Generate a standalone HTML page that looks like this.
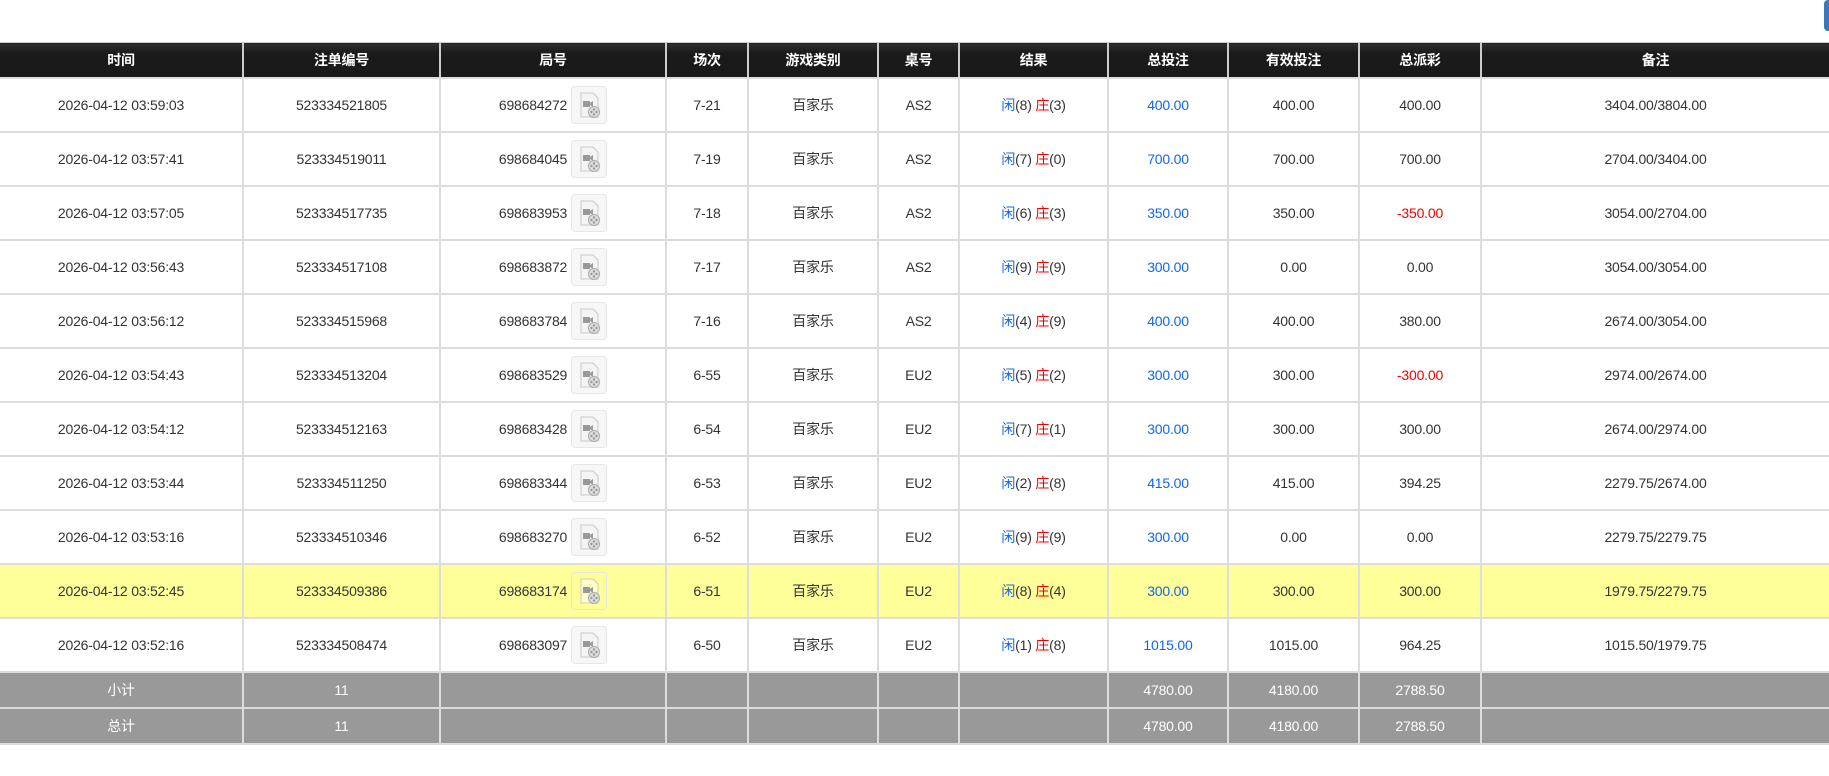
<!DOCTYPE html>
<html><head><meta charset="utf-8"><style>
body{margin:0;background:#fff;font-family:"Liberation Sans","Noto Sans CJK SC",sans-serif;font-size:14px;color:#333;width:1829px;height:776px;overflow:hidden;position:relative}
.btn{position:absolute;right:0;top:0;width:5px;height:31px;background:#3a78b8;border-radius:4px 0 0 4px}
table{position:absolute;top:42px;left:0;width:1829px;border-collapse:collapse;table-layout:fixed}
th,td{text-align:center;border:2px solid #ddd;padding:0;white-space:nowrap;letter-spacing:-0.2px}
tr>*:first-child{border-left:none}
tr>*:last-child{border-right:none}
th{background:linear-gradient(#2e2e2e,#1a1a1a 30%,#1a1a1a);color:#fff;font-weight:bold;height:34px;border-top:1px solid #ccc;border-left-color:#ccc;border-right-color:#ccc}
td{height:52px}
tr.y td{background:#ffff99}
tr.f td{background:#999;color:#fff;height:34px}
.b{color:#1166ee}.r{color:#e00}
.n{display:inline-flex;align-items:center;gap:4px}
.ic{display:inline-block;width:34px;height:36px;border:1px solid #e6e6e6;border-radius:4px;background:#f7f7f7}
tr.y .ic{background:#ffff99}
</style></head><body>
<div class="btn"></div>
<table>
<colgroup><col style="width:243px"><col style="width:197px"><col style="width:226px"><col style="width:82px"><col style="width:130px"><col style="width:81px"><col style="width:149px"><col style="width:120px"><col style="width:131px"><col style="width:122px"><col></colgroup>
<tr><th>时间</th><th>注单编号</th><th>局号</th><th>场次</th><th>游戏类别</th><th>桌号</th><th>结果</th><th>总投注</th><th>有效投注</th><th>总派彩</th><th>备注</th></tr>
<tr><td>2026-04-12 03:59:03</td><td>523334521805</td><td><span class="n">698684272<span class="ic"><svg width="34" height="36"><path d="M9 6h12l5 5v19H9z" fill="#f4f4f4" stroke="#c8c8c8"/><path d="M11 14h7v6h-7z M18 16l3-2v6l-3-2z" fill="#999"/><circle cx="22" cy="25" r="5.5" fill="#ddd" stroke="#aaa"/><circle cx="22" cy="22.5" r="1.2" fill="#999"/><circle cx="22" cy="27.5" r="1.2" fill="#999"/><circle cx="19.5" cy="25" r="1.2" fill="#999"/><circle cx="24.5" cy="25" r="1.2" fill="#999"/></svg></span></span></td><td>7-21</td><td>百家乐</td><td>AS2</td><td><span class="b">闲</span>(8) <span class="r">庄</span>(3)</td><td class="b">400.00</td><td>400.00</td><td>400.00</td><td>3404.00/3804.00</td></tr>
<tr><td>2026-04-12 03:57:41</td><td>523334519011</td><td><span class="n">698684045<span class="ic"><svg width="34" height="36"><path d="M9 6h12l5 5v19H9z" fill="#f4f4f4" stroke="#c8c8c8"/><path d="M11 14h7v6h-7z M18 16l3-2v6l-3-2z" fill="#999"/><circle cx="22" cy="25" r="5.5" fill="#ddd" stroke="#aaa"/><circle cx="22" cy="22.5" r="1.2" fill="#999"/><circle cx="22" cy="27.5" r="1.2" fill="#999"/><circle cx="19.5" cy="25" r="1.2" fill="#999"/><circle cx="24.5" cy="25" r="1.2" fill="#999"/></svg></span></span></td><td>7-19</td><td>百家乐</td><td>AS2</td><td><span class="b">闲</span>(7) <span class="r">庄</span>(0)</td><td class="b">700.00</td><td>700.00</td><td>700.00</td><td>2704.00/3404.00</td></tr>
<tr><td>2026-04-12 03:57:05</td><td>523334517735</td><td><span class="n">698683953<span class="ic"><svg width="34" height="36"><path d="M9 6h12l5 5v19H9z" fill="#f4f4f4" stroke="#c8c8c8"/><path d="M11 14h7v6h-7z M18 16l3-2v6l-3-2z" fill="#999"/><circle cx="22" cy="25" r="5.5" fill="#ddd" stroke="#aaa"/><circle cx="22" cy="22.5" r="1.2" fill="#999"/><circle cx="22" cy="27.5" r="1.2" fill="#999"/><circle cx="19.5" cy="25" r="1.2" fill="#999"/><circle cx="24.5" cy="25" r="1.2" fill="#999"/></svg></span></span></td><td>7-18</td><td>百家乐</td><td>AS2</td><td><span class="b">闲</span>(6) <span class="r">庄</span>(3)</td><td class="b">350.00</td><td>350.00</td><td class="r">-350.00</td><td>3054.00/2704.00</td></tr>
<tr><td>2026-04-12 03:56:43</td><td>523334517108</td><td><span class="n">698683872<span class="ic"><svg width="34" height="36"><path d="M9 6h12l5 5v19H9z" fill="#f4f4f4" stroke="#c8c8c8"/><path d="M11 14h7v6h-7z M18 16l3-2v6l-3-2z" fill="#999"/><circle cx="22" cy="25" r="5.5" fill="#ddd" stroke="#aaa"/><circle cx="22" cy="22.5" r="1.2" fill="#999"/><circle cx="22" cy="27.5" r="1.2" fill="#999"/><circle cx="19.5" cy="25" r="1.2" fill="#999"/><circle cx="24.5" cy="25" r="1.2" fill="#999"/></svg></span></span></td><td>7-17</td><td>百家乐</td><td>AS2</td><td><span class="b">闲</span>(9) <span class="r">庄</span>(9)</td><td class="b">300.00</td><td>0.00</td><td>0.00</td><td>3054.00/3054.00</td></tr>
<tr><td>2026-04-12 03:56:12</td><td>523334515968</td><td><span class="n">698683784<span class="ic"><svg width="34" height="36"><path d="M9 6h12l5 5v19H9z" fill="#f4f4f4" stroke="#c8c8c8"/><path d="M11 14h7v6h-7z M18 16l3-2v6l-3-2z" fill="#999"/><circle cx="22" cy="25" r="5.5" fill="#ddd" stroke="#aaa"/><circle cx="22" cy="22.5" r="1.2" fill="#999"/><circle cx="22" cy="27.5" r="1.2" fill="#999"/><circle cx="19.5" cy="25" r="1.2" fill="#999"/><circle cx="24.5" cy="25" r="1.2" fill="#999"/></svg></span></span></td><td>7-16</td><td>百家乐</td><td>AS2</td><td><span class="b">闲</span>(4) <span class="r">庄</span>(9)</td><td class="b">400.00</td><td>400.00</td><td>380.00</td><td>2674.00/3054.00</td></tr>
<tr><td>2026-04-12 03:54:43</td><td>523334513204</td><td><span class="n">698683529<span class="ic"><svg width="34" height="36"><path d="M9 6h12l5 5v19H9z" fill="#f4f4f4" stroke="#c8c8c8"/><path d="M11 14h7v6h-7z M18 16l3-2v6l-3-2z" fill="#999"/><circle cx="22" cy="25" r="5.5" fill="#ddd" stroke="#aaa"/><circle cx="22" cy="22.5" r="1.2" fill="#999"/><circle cx="22" cy="27.5" r="1.2" fill="#999"/><circle cx="19.5" cy="25" r="1.2" fill="#999"/><circle cx="24.5" cy="25" r="1.2" fill="#999"/></svg></span></span></td><td>6-55</td><td>百家乐</td><td>EU2</td><td><span class="b">闲</span>(5) <span class="r">庄</span>(2)</td><td class="b">300.00</td><td>300.00</td><td class="r">-300.00</td><td>2974.00/2674.00</td></tr>
<tr><td>2026-04-12 03:54:12</td><td>523334512163</td><td><span class="n">698683428<span class="ic"><svg width="34" height="36"><path d="M9 6h12l5 5v19H9z" fill="#f4f4f4" stroke="#c8c8c8"/><path d="M11 14h7v6h-7z M18 16l3-2v6l-3-2z" fill="#999"/><circle cx="22" cy="25" r="5.5" fill="#ddd" stroke="#aaa"/><circle cx="22" cy="22.5" r="1.2" fill="#999"/><circle cx="22" cy="27.5" r="1.2" fill="#999"/><circle cx="19.5" cy="25" r="1.2" fill="#999"/><circle cx="24.5" cy="25" r="1.2" fill="#999"/></svg></span></span></td><td>6-54</td><td>百家乐</td><td>EU2</td><td><span class="b">闲</span>(7) <span class="r">庄</span>(1)</td><td class="b">300.00</td><td>300.00</td><td>300.00</td><td>2674.00/2974.00</td></tr>
<tr><td>2026-04-12 03:53:44</td><td>523334511250</td><td><span class="n">698683344<span class="ic"><svg width="34" height="36"><path d="M9 6h12l5 5v19H9z" fill="#f4f4f4" stroke="#c8c8c8"/><path d="M11 14h7v6h-7z M18 16l3-2v6l-3-2z" fill="#999"/><circle cx="22" cy="25" r="5.5" fill="#ddd" stroke="#aaa"/><circle cx="22" cy="22.5" r="1.2" fill="#999"/><circle cx="22" cy="27.5" r="1.2" fill="#999"/><circle cx="19.5" cy="25" r="1.2" fill="#999"/><circle cx="24.5" cy="25" r="1.2" fill="#999"/></svg></span></span></td><td>6-53</td><td>百家乐</td><td>EU2</td><td><span class="b">闲</span>(2) <span class="r">庄</span>(8)</td><td class="b">415.00</td><td>415.00</td><td>394.25</td><td>2279.75/2674.00</td></tr>
<tr><td>2026-04-12 03:53:16</td><td>523334510346</td><td><span class="n">698683270<span class="ic"><svg width="34" height="36"><path d="M9 6h12l5 5v19H9z" fill="#f4f4f4" stroke="#c8c8c8"/><path d="M11 14h7v6h-7z M18 16l3-2v6l-3-2z" fill="#999"/><circle cx="22" cy="25" r="5.5" fill="#ddd" stroke="#aaa"/><circle cx="22" cy="22.5" r="1.2" fill="#999"/><circle cx="22" cy="27.5" r="1.2" fill="#999"/><circle cx="19.5" cy="25" r="1.2" fill="#999"/><circle cx="24.5" cy="25" r="1.2" fill="#999"/></svg></span></span></td><td>6-52</td><td>百家乐</td><td>EU2</td><td><span class="b">闲</span>(9) <span class="r">庄</span>(9)</td><td class="b">300.00</td><td>0.00</td><td>0.00</td><td>2279.75/2279.75</td></tr>
<tr class="y"><td>2026-04-12 03:52:45</td><td>523334509386</td><td><span class="n">698683174<span class="ic"><svg width="34" height="36"><path d="M9 6h12l5 5v19H9z" fill="#ffffcc" stroke="#c8c8c8"/><path d="M11 14h7v6h-7z M18 16l3-2v6l-3-2z" fill="#999"/><circle cx="22" cy="25" r="5.5" fill="#ddd" stroke="#aaa"/><circle cx="22" cy="22.5" r="1.2" fill="#999"/><circle cx="22" cy="27.5" r="1.2" fill="#999"/><circle cx="19.5" cy="25" r="1.2" fill="#999"/><circle cx="24.5" cy="25" r="1.2" fill="#999"/></svg></span></span></td><td>6-51</td><td>百家乐</td><td>EU2</td><td><span class="b">闲</span>(8) <span class="r">庄</span>(4)</td><td class="b">300.00</td><td>300.00</td><td>300.00</td><td>1979.75/2279.75</td></tr>
<tr><td>2026-04-12 03:52:16</td><td>523334508474</td><td><span class="n">698683097<span class="ic"><svg width="34" height="36"><path d="M9 6h12l5 5v19H9z" fill="#f4f4f4" stroke="#c8c8c8"/><path d="M11 14h7v6h-7z M18 16l3-2v6l-3-2z" fill="#999"/><circle cx="22" cy="25" r="5.5" fill="#ddd" stroke="#aaa"/><circle cx="22" cy="22.5" r="1.2" fill="#999"/><circle cx="22" cy="27.5" r="1.2" fill="#999"/><circle cx="19.5" cy="25" r="1.2" fill="#999"/><circle cx="24.5" cy="25" r="1.2" fill="#999"/></svg></span></span></td><td>6-50</td><td>百家乐</td><td>EU2</td><td><span class="b">闲</span>(1) <span class="r">庄</span>(8)</td><td class="b">1015.00</td><td>1015.00</td><td>964.25</td><td>1015.50/1979.75</td></tr>
<tr class="f"><td>小计</td><td>11</td><td></td><td></td><td></td><td></td><td></td><td>4780.00</td><td>4180.00</td><td>2788.50</td><td></td></tr>
<tr class="f"><td>总计</td><td>11</td><td></td><td></td><td></td><td></td><td></td><td>4780.00</td><td>4180.00</td><td>2788.50</td><td></td></tr>
</table>
</body></html>
